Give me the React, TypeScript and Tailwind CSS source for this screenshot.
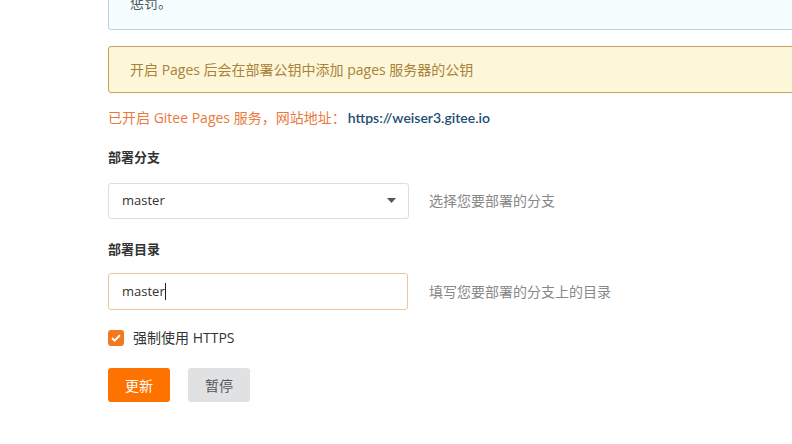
const FONT = "font-['Open_Sans','Noto_Sans_CJK_SC',sans-serif]";

const App: React.FC = () => {
  return (
    <div className={`w-[792px] h-[444px] overflow-hidden bg-white ${FONT} text-[14px]`}>
      <div className="ml-[108px] w-[760px] -mt-[18px]">
        <div className="border border-[#b7d5dc] bg-[#f6fdff] rounded-[3px] px-[21px] pt-[10px] pb-[16px] leading-[20px] text-[#4a5a60]">
          惩罚。
        </div>

        <div className="mt-[16px] border border-[#c8a45a] bg-[#fef6d8] rounded-[3px] px-[21px] h-[47px] flex items-center text-[#a8823a]">
          开启 Pages 后会在部署公钥中添加 pages 服务器的公钥
        </div>

        <div className="mt-[14px] flex items-center gap-[2px]">
          <span className="text-[#ea7a3c]">已开启 Gitee Pages 服务，网站地址：</span>
          <span className="text-[#1d4c74] font-semibold font-['Lato','Noto_Sans_CJK_SC',sans-serif]">https://weiser3.gitee.io</span>
        </div>

        <div className="mt-[20px] text-[13px] font-bold text-[#333]">部署分支</div>
        <div className="mt-[15px] flex items-center">
          <div className="w-[301px] h-[36px] border border-[#dedede] rounded-[3px] flex items-center justify-between pl-[13px] pr-[12px] text-[#333] text-[13px]">
            <span>master</span>
            <svg width="9" height="5" viewBox="0 0 9 5">
              <path d="M0 0h9L4.5 5z" fill="#555" />
            </svg>
          </div>
          <span className="ml-[20px] text-[#888]">选择您要部署的分支</span>
        </div>

        <div className="mt-[21px] text-[13px] font-bold text-[#333]">部署目录</div>
        <div className="mt-[14px] flex items-center">
          <div className="w-[300px] h-[37px] border border-[#ecc59c] rounded-[3px] flex items-center pl-[13px] text-[#333] text-[13px]">
            <span>master</span>
            <span className="w-px h-[17px] bg-[#222]" />
          </div>
          <span className="ml-[21px] text-[#888]">填写您要部署的分支上的目录</span>
        </div>

        <div className="mt-[17px] flex items-center gap-[9px]">
          <span className="w-[16px] h-[16px] rounded-[3px] bg-[#f4781e] flex items-center justify-center">
            <svg width="10" height="8" viewBox="0 0 10 8">
              <path d="M1 4l2.6 2.6L9 1.2" stroke="#fff" strokeWidth="2" fill="none" />
            </svg>
          </span>
          <span className="text-[#333] text-[14px]">强制使用 HTTPS</span>
        </div>

        <div className="mt-[20px] flex gap-[18px]">
          <button className="w-[62px] h-[34px] rounded-[3px] bg-[#fe7300] text-white text-[14px]">更新</button>
          <button className="w-[62px] h-[34px] rounded-[3px] bg-[#e0e1e2] text-[#555] text-[14px]">暂停</button>
        </div>
      </div>
    </div>
  );
};

export default App;
